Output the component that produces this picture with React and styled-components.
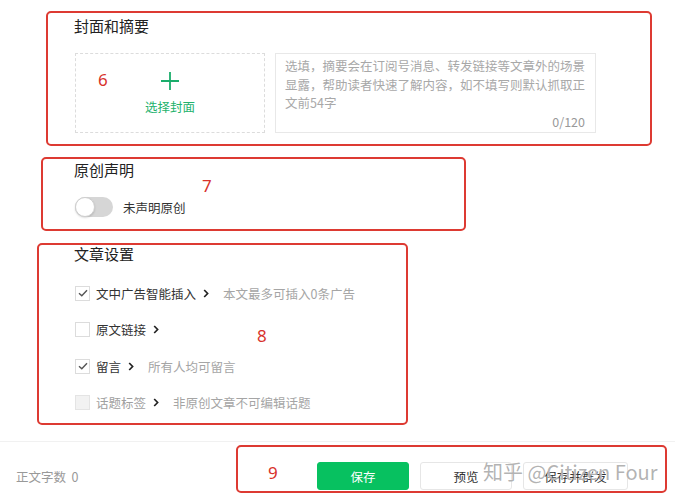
import React from "react";
import styled, { createGlobalStyle } from "styled-components";

const Global = createGlobalStyle`
  html, body { margin: 0; padding: 0; background: #fff; }
  body {
    font-family: "Noto Sans CJK SC", "Noto Sans", sans-serif;
    color: #333;
    width: 675px;
    height: 500px;
    overflow: hidden;
  }
  * { box-sizing: border-box; }
`;

const Page = styled.div`
  position: relative;
  width: 675px;
  height: 500px;
  display: flex;
  flex-direction: column;
`;

const Section = styled.section`
  position: relative;
  margin: ${(p) => p.$mt}px 0 0 ${(p) => p.$left}px;
  width: ${(p) => p.$w}px;
  height: ${(p) => p.$h}px;
  padding: ${(p) => p.$pt}px 0 0 ${(p) => 72 - p.$left}px;
  border: 2px solid #dd3a32;
  border-radius: 5px;
  display: flex;
  flex-direction: column;
`;

const Title = styled.h2`
  margin: 0;
  font-size: 15px;
  font-weight: 400;
  line-height: ${(p) => p.$lh || 20}px;
  color: #222;
`;

const Mark = styled.span`
  position: absolute;
  left: ${(p) => p.$x}px;
  top: ${(p) => p.$y}px;
  font-family: "Noto Sans", "Liberation Sans", sans-serif;
  font-size: 17px;
  line-height: 20px;
  color: #d8322b;
`;

const CoverRow = styled.div`
  display: flex;
  gap: 10px;
  margin-top: 17px;
  margin-left: 1px;
`;

const CoverPicker = styled.div`
  width: 190px;
  height: 80px;
  border: 1px dashed #dcdcdc;
  display: flex;
  flex-direction: column;
  align-items: center;
  justify-content: center;
`;

const CoverLabel = styled.span`
  margin-top: 9px;
  font-size: 12.5px;
  line-height: 16px;
  color: #24b26d;
`;

const Summary = styled.div`
  position: relative;
  width: 321px;
  height: 80px;
  border: 1px solid #e8e8e8;
  padding: 3px 8px 0 9px;
  font-size: 12.5px;
  line-height: 18.5px;
  color: #a8a8a8;
`;

const Counter = styled.span`
  position: absolute;
  right: 10px;
  bottom: 2px;
  font-size: 12.5px;
  line-height: 16px;
  color: #999;
`;

const ToggleRow = styled.div`
  display: flex;
  align-items: center;
  gap: 10px;
  margin-top: 17px;
  margin-left: 1px;
`;

const Track = styled.span`
  position: relative;
  width: 38px;
  height: 20px;
  border-radius: 10px;
  background: #d6d6d6;
  flex: none;
`;

const Thumb = styled.span`
  position: absolute;
  left: 0;
  top: 0;
  width: 20px;
  height: 20px;
  border-radius: 50%;
  background: #fff;
  border: 1px solid #cfcfcf;
  box-shadow: 0 1px 2px rgba(0, 0, 0, 0.15);
`;

const ToggleLabel = styled.span`
  font-size: 12.5px;
  color: #333;
`;

const Options = styled.div`
  display: flex;
  flex-direction: column;
  gap: 16.5px;
  margin-top: 20px;
  margin-left: 1px;
`;

const OptionRow = styled.div`
  display: flex;
  align-items: center;
  height: 20px;
`;

const Box = styled.span`
  width: 15px;
  height: 15px;
  border: 1px solid ${(p) => (p.$disabled ? "#e4e4e4" : "#dcdcdc")};
  background: ${(p) => (p.$disabled ? "#f2f2f2" : "#fff")};
  display: flex;
  align-items: center;
  justify-content: center;
  margin-right: 6px;
  flex: none;
`;

const OptLabel = styled.span`
  font-size: 12.5px;
  color: ${(p) => (p.$disabled ? "#a0a0a0" : "#333")};
`;

const Chevron = styled.svg`
  margin-left: 7px;
  flex: none;
`;

const Hint = styled.span`
  margin-left: 14px;
  font-size: 12.5px;
  color: #a5a5a5;
`;

const Divider = styled.div`
  margin-top: 16px;
  height: 1px;
  background: #f1f1f1;
`;

const Footer = styled.footer`
  display: flex;
  align-items: flex-start;
  padding: 3px 8px 0 16px;
`;

const WordCount = styled.span`
  margin-top: 22px;
  font-size: 12.5px;
  line-height: 20px;
  color: #999;
`;

const ActionBox = styled.div`
  position: relative;
  margin-left: auto;
  width: 431px;
  height: 48px;
  border: 2px solid #dd3a32;
  border-radius: 5px;
  display: flex;
  gap: 11px;
  padding: 15px 0 0 79px;
`;

const Button = styled.button`
  width: ${(p) => p.$w}px;
  height: 28px;
  border: 1px solid ${(p) => (p.$primary ? "#07c160" : "#e6e6e6")};
  background: ${(p) => (p.$primary ? "#07c160" : "#fff")};
  color: ${(p) => (p.$primary ? "#fff" : "#333")};
  border-radius: 3px;
  font-family: inherit;
  font-size: 12.5px;
  padding: 0;
  flex: none;
`;

const Watermark = styled.span`
  position: absolute;
  left: 483px;
  top: 458px;
  font-size: 20px;
  line-height: 28px;
  color: rgba(150, 150, 150, 0.72);
  text-shadow: 0 0 1px #fff;
  white-space: nowrap;
  pointer-events: none;
`;

const Check = () => (
  <svg width="10" height="8" viewBox="0 0 10 8">
    <path d="M1 4.2 L3.8 6.8 L9 1.2" fill="none" stroke="#555" strokeWidth="1.4" />
  </svg>
);

const Arrow = () => (
  <Chevron width="6" height="9" viewBox="0 0 6 9">
    <path d="M1.2 1 L4.6 4.5 L1.2 8" fill="none" stroke="#222" strokeWidth="1.7" />
  </Chevron>
);

const options = [
  { label: "文中广告智能插入", hint: "本文最多可插入0条广告", checked: true },
  { label: "原文链接" },
  { label: "留言", hint: "所有人均可留言", checked: true },
  { label: "话题标签", hint: "非原创文章不可编辑话题", disabled: true },
];

export default function App() {
  return (
    <Page>
      <Global />
      <Section $mt={11} $left={46} $w={606} $h={135} $pt={3}>
        <Title>封面和摘要</Title>
        <Mark $x={50} $y={57}>6</Mark>
        <CoverRow>
          <CoverPicker>
            <svg width="18" height="18" viewBox="0 0 18 18">
              <path d="M9 0 V18 M0 9 H18" stroke="#1aad6b" strokeWidth="1.8" />
            </svg>
            <CoverLabel>选择封面</CoverLabel>
          </CoverPicker>
          <Summary>
            选填，摘要会在订阅号消息、转发链接等文章外的场景显露，帮助读者快速了解内容，如不填写则默认抓取正文前54字
            <Counter>0/120</Counter>
          </Summary>
        </CoverRow>
      </Section>

      <Section $mt={11} $left={41} $w={425} $h={74} $pt={1}>
        <Title>原创声明</Title>
        <Mark $x={159} $y={17}>7</Mark>
        <ToggleRow>
          <Track>
            <Thumb />
          </Track>
          <ToggleLabel>未声明原创</ToggleLabel>
        </ToggleRow>
      </Section>

      <Section $mt={12} $left={37} $w={371} $h={182} $pt={0}>
        <Title $lh={18}>文章设置</Title>
        <Mark $x={218} $y={81}>8</Mark>
        <Options>
          {options.map((o) => (
            <OptionRow key={o.label}>
              <Box $disabled={o.disabled}>{o.checked && <Check />}</Box>
              <OptLabel $disabled={o.disabled}>{o.label}</OptLabel>
              <Arrow />
              {o.hint && <Hint>{o.hint}</Hint>}
            </OptionRow>
          ))}
        </Options>
      </Section>

      <Divider />
      <Footer>
        <WordCount>正文字数&nbsp;&nbsp;0</WordCount>
        <ActionBox>
          <Mark $x={30} $y={16}>9</Mark>
          <Button $primary $w={92}>保存</Button>
          <Button $w={92}>预览</Button>
          <Button $w={105}>保存并群发</Button>
        </ActionBox>
      </Footer>
      <Watermark>知乎 @Citizen Four</Watermark>
    </Page>
  );
}
